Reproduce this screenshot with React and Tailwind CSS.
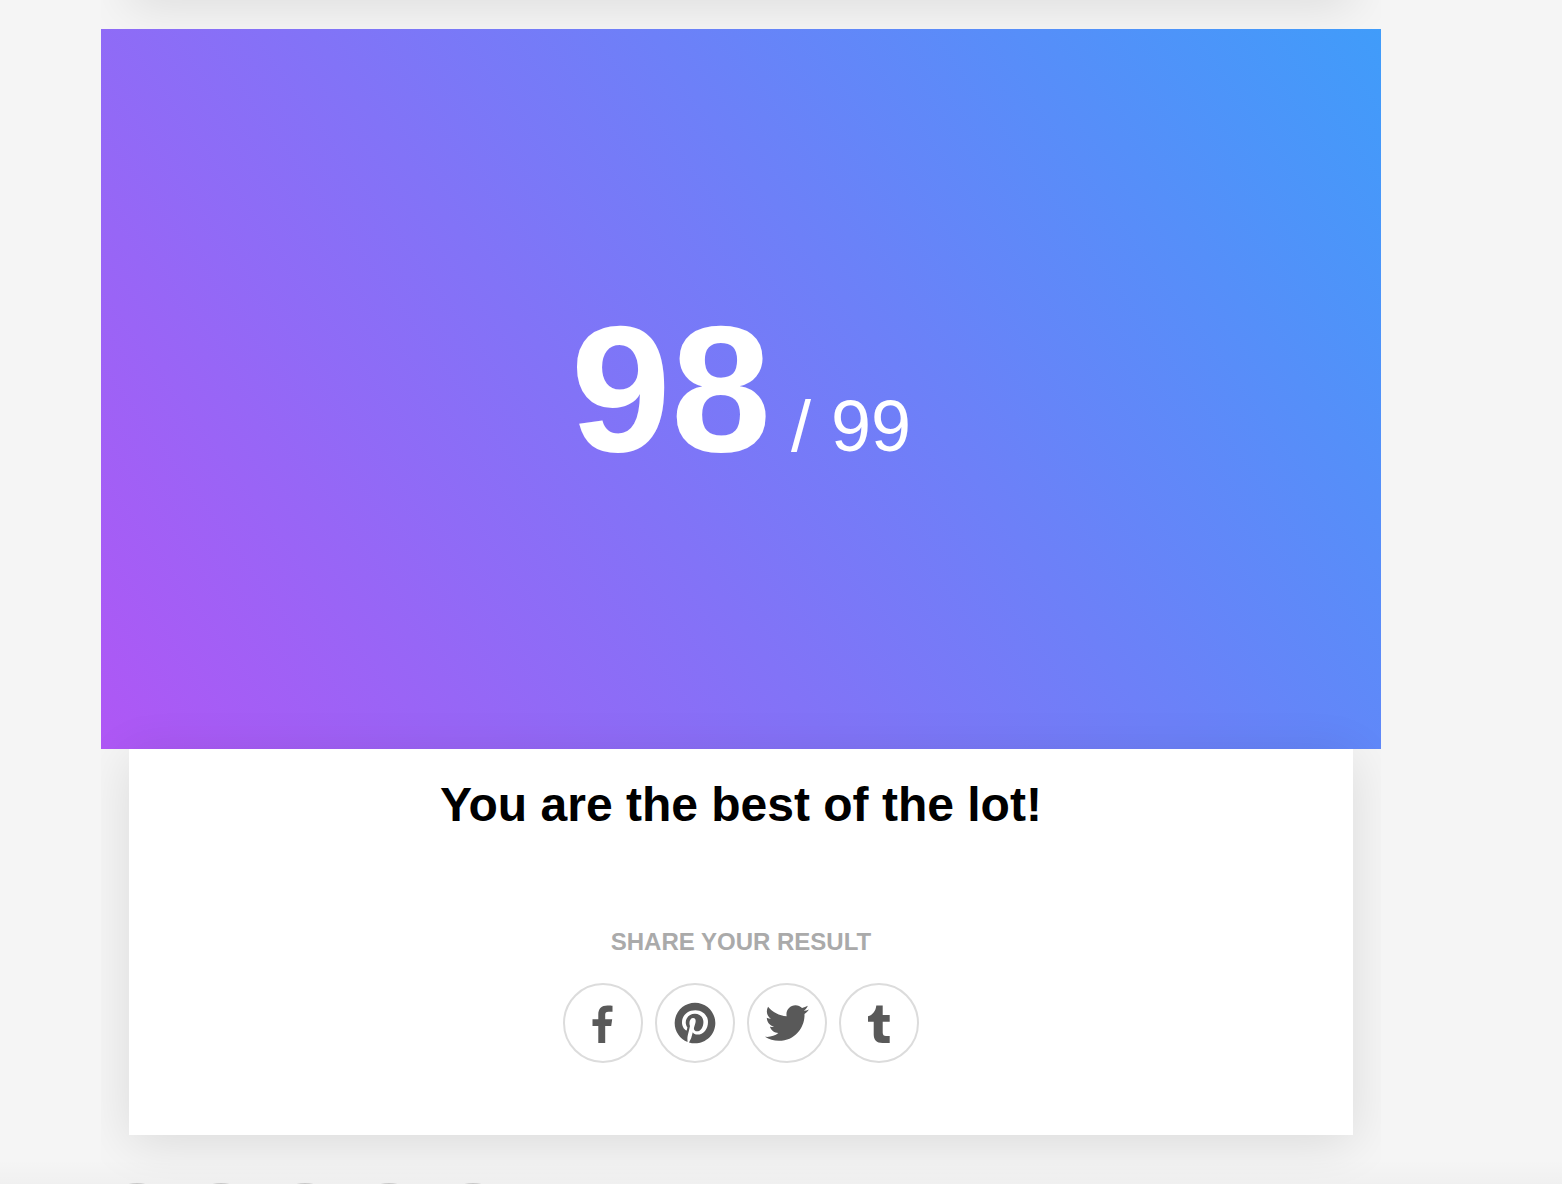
import { FaPinterest, FaTwitter } from 'react-icons/fa';

function FacebookIcon({ className }) {
    return (
        <svg className={className} viewBox="0 0 80 80" fill="currentColor" aria-hidden="true">
            <path d="M29.5 36.3h5.8v-4.8C35.3 25.5 38.5 22.4 44.5 22.4c2.3 0 4.3.1 5 .3v6h-4c-2.6 0-3.3 1.1-3.3 3.1v4.5h7l-1 6.7h-6V60h-6.9V43h-5.8z" />
        </svg>
    );
}

function TumblrIcon({ className }) {
    return (
        <svg className={className} viewBox="0 0 80 80" fill="currentColor" aria-hidden="true">
            <path d="M37.3 22.4h6.4V32h7v6.7h-7v10.8c0 2.5 1.1 3.5 3.3 3.5h3.7v7h-7.2c-6 0-8.8-3.5-8.8-8.5V38.7H29v-5.5c4.5-1.2 7.8-5.2 8.3-10.8z" />
        </svg>
    );
}

const shareLinks = [
    { name: 'Facebook', Icon: FacebookIcon, size: 'w-20 h-20' },
    { name: 'Pinterest', Icon: FaPinterest, size: 'w-[42px] h-[42px]' },
    { name: 'Twitter', Icon: FaTwitter, size: 'w-11 h-11' },
    { name: 'Tumblr', Icon: TumblrIcon, size: 'w-20 h-20' },
];

const reactions = ['1', '2', '3', '4', '5'];

export default function App() {
    return (
        <div className="relative h-screen overflow-hidden bg-[#f5f5f5] font-['Liberation_Sans',Arial,sans-serif]">
            <main className="pl-[101px] pr-[181px]">
                <div className="overflow-hidden pb-12">
                    {/* Previous question */}
                    <div className="mx-7 -mt-12 mb-8 h-[45px] bg-white shadow-[0_8px_48px_rgba(0,0,0,0.11)]"></div>

                    {/* Score */}
                    <section className="flex h-[720px] items-center justify-center bg-[linear-gradient(54deg,#af57f5,#409cfa)] text-white">
                        <p className="text-[72px] leading-none">
                            <strong className="text-[180px] font-bold">98</strong> / 99
                        </p>
                    </section>

                    {/* Result */}
                    <section className="mx-7 bg-white pt-7 pb-[72px] text-center shadow-[0_8px_48px_rgba(0,0,0,0.11)]">
                        <h1 className="text-5xl leading-[56px] font-bold text-black">You are the best of the lot!</h1>
                        <h2 className="mt-[93px] text-2xl leading-8 font-bold text-[#aaaaaa] uppercase">Share your result</h2>
                        <div className="mt-[25px] flex justify-center gap-3">
                            {shareLinks.map(({ name, Icon, size }) => (
                                <a
                                    key={name}
                                    href="#share"
                                    aria-label={name}
                                    className="flex h-20 w-20 items-center justify-center rounded-full border-2 border-[#dcdcdc] text-[#595959]"
                                >
                                    <Icon className={`shrink-0 ${size}`} />
                                </a>
                            ))}
                        </div>
                    </section>
                </div>

                {/* Reactions */}
                <div className="flex gap-3">
                    {reactions.map((id) => (
                        <button key={id} type="button" aria-label={`Reaction ${id}`} className="h-[72px] w-[72px] shrink-0 rounded-full bg-[#cccccc]"></button>
                    ))}
                </div>
            </main>

            <div className="pointer-events-none absolute inset-x-0 bottom-0 h-6 bg-gradient-to-b from-black/0 to-black/2"></div>
        </div>
    );
}
